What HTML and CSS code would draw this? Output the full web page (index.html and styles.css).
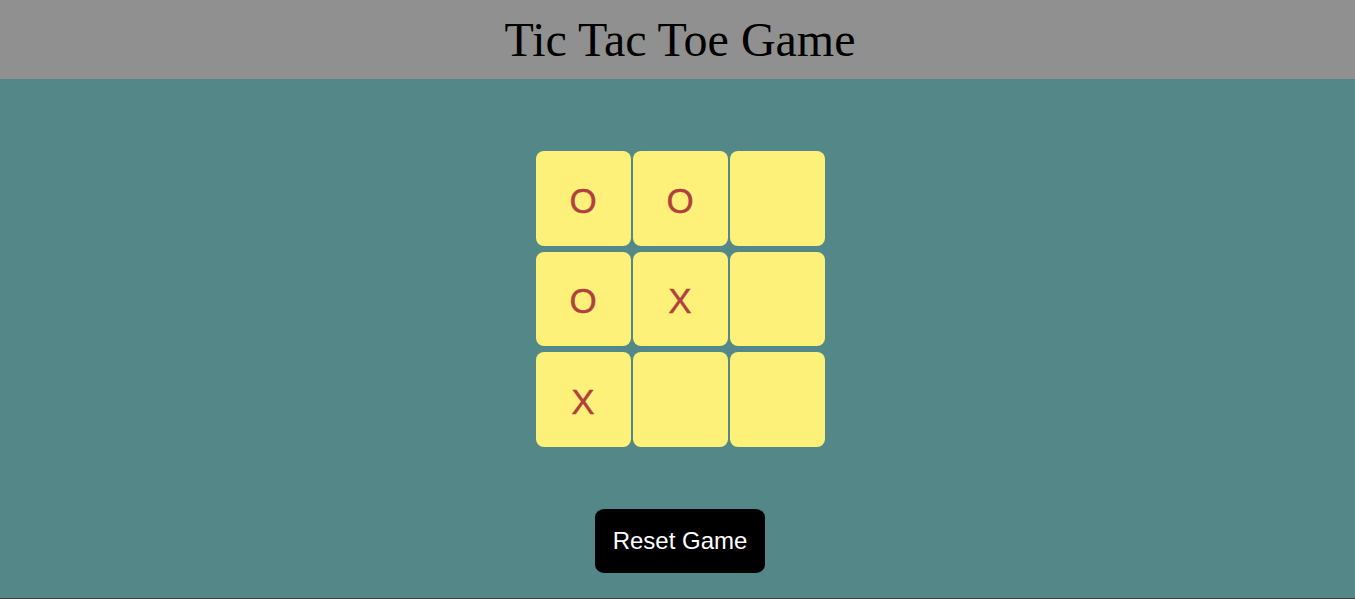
FILE: index.html
```html
<!DOCTYPE html>
<html>
<head>
<meta charset="utf-8">
<title>Tic Tac Toe Game</title>
<link rel="stylesheet" href="styles.css">
</head>
<body>
<header class="header">
  <h1 class="title">Tic Tac Toe Game</h1>
</header>
<main class="main">
  <div class="board">
    <button class="cell">O</button>
    <button class="cell">O</button>
    <button class="cell"></button>
    <button class="cell">O</button>
    <button class="cell">X</button>
    <button class="cell"></button>
    <button class="cell">X</button>
    <button class="cell"></button>
    <button class="cell"></button>
  </div>
  <button class="reset">Reset Game</button>
</main>
</body>
</html>
```

FILE: styles.css
```css
html, body {
  margin: 0;
  padding: 0;
}
body {
  background: #3f3d4a;
  height: 599px;
  display: flex;
  flex-direction: column;
  overflow: hidden;
}
.header {
  background: #8f908f;
  height: 79px;
  display: flex;
  align-items: center;
  justify-content: center;
  padding-left: 5px;
}
.title {
  margin: 0;
  font-family: "Liberation Serif", "Times New Roman", serif;
  font-weight: normal;
  font-size: 48px;
  color: #000;
  line-height: 1;
  padding-top: 1px;
}
.main {
  background: #548787;
  height: 519px;
  display: flex;
  flex-direction: column;
  align-items: center;
  padding-left: 5px;
  box-sizing: border-box;
}
.board {
  margin-top: 72px;
  display: grid;
  grid-template-columns: repeat(3, 95px);
  grid-template-rows: repeat(3, 94.5px);
  column-gap: 2px;
  row-gap: 6px;
}
.cell {
  background: #fef17a;
  border: none;
  border-radius: 8px;
  padding: 5px 0 0;
  font-family: "Liberation Sans", Arial, sans-serif;
  font-size: 35px;
  color: #b0413e;
  display: flex;
  align-items: center;
  justify-content: center;
  -webkit-text-stroke: 0.4px #b0413e;
}
.reset {
  margin-top: 62px;
  width: 170px;
  height: 64px;
  background: #000;
  color: #fff;
  border: none;
  border-radius: 10px / 8px;
  font-family: "Liberation Sans", Arial, sans-serif;
  font-size: 24px;
  padding: 0;
}
```
